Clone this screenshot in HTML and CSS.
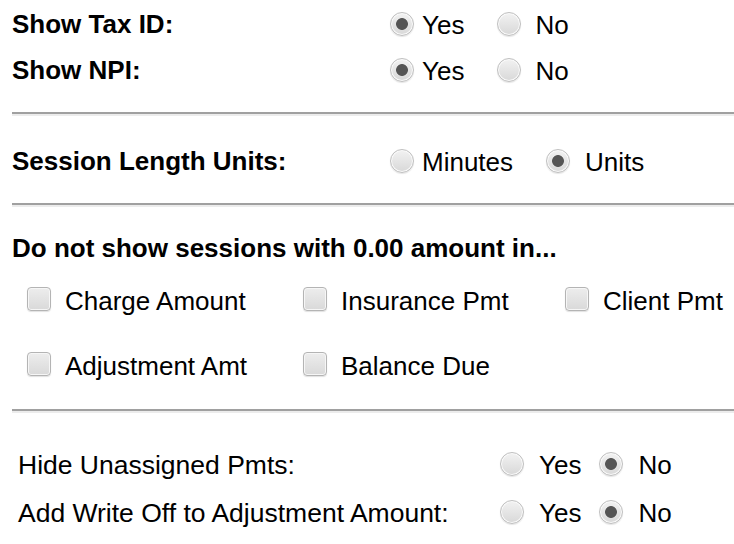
FILE: index.html
```html
<!DOCTYPE html>
<html>
<head>
<meta charset="utf-8">
<link rel="stylesheet" href="styles.css">
</head>
<body>
<div class="page">
  <section class="sec sec-top">
    <div class="row">
      <div class="lbl bold">Show Tax ID:</div>
      <div class="opts">
        <label class="opt"><input type="radio" name="tax" checked><span>Yes</span></label>
        <label class="opt wide"><input type="radio" name="tax"><span>No</span></label>
      </div>
    </div>
    <div class="row">
      <div class="lbl bold">Show NPI:</div>
      <div class="opts">
        <label class="opt"><input type="radio" name="npi" checked><span>Yes</span></label>
        <label class="opt wide"><input type="radio" name="npi"><span>No</span></label>
      </div>
    </div>
  </section>
  <hr class="sep">
  <section class="sec sec-session">
    <div class="row">
      <div class="lbl bold">Session Length Units:</div>
      <div class="opts">
        <label class="opt"><input type="radio" name="units"><span>Minutes</span></label>
        <label class="opt wider"><input type="radio" name="units" checked><span>Units</span></label>
      </div>
    </div>
  </section>
  <hr class="sep">
  <section class="sec sec-zero">
    <div class="heading bold">Do not show sessions with 0.00 amount in...</div>
    <div class="checks">
      <label class="chk"><input type="checkbox"><span>Charge Amount</span></label>
      <label class="chk"><input type="checkbox"><span>Insurance Pmt</span></label>
      <label class="chk"><input type="checkbox"><span>Client Pmt</span></label>
      <label class="chk"><input type="checkbox"><span>Adjustment Amt</span></label>
      <label class="chk"><input type="checkbox"><span>Balance Due</span></label>
    </div>
  </section>
  <hr class="sep">
  <section class="sec sec-bottom">
    <div class="row row-b">
      <div class="lbl lbl-b">Hide Unassigned Pmts:</div>
      <div class="opts opts-b">
        <label class="opt wider"><input type="radio" name="hide"><span>Yes</span></label>
        <label class="opt wider"><input type="radio" name="hide" checked><span>No</span></label>
      </div>
    </div>
    <div class="row row-b">
      <div class="lbl lbl-b">Add Write Off to Adjustment Amount:</div>
      <div class="opts opts-b">
        <label class="opt wider"><input type="radio" name="wo"><span>Yes</span></label>
        <label class="opt wider"><input type="radio" name="wo" checked><span>No</span></label>
      </div>
    </div>
  </section>
</div>
</body>
</html>
```
FILE: styles.css
```css
html, body {
  margin: 0;
  padding: 0;
  background: #fff;
}
body {
  font-family: "Liberation Sans", Arial, sans-serif;
  font-size: 26px;
  color: #000;
}
.page {
  padding-left: 12px;
}
.sec {
  display: flex;
  flex-direction: column;
}
.sec-top {
  padding-top: 1px;
}
.row {
  display: flex;
  align-items: center;
  height: 46px;
}
.lbl {
  width: 378px;
  flex: none;
}
.bold {
  font-weight: bold;
}
.opts {
  display: flex;
  align-items: center;
  gap: 33px;
}
.opt {
  display: flex;
  align-items: center;
  gap: 8px;
}
.opt span {
  padding-top: 2px;
}
.opt.wide {
  gap: 14px;
}
.opt.wider {
  gap: 15px;
}
input[type="radio"] {
  appearance: none;
  -webkit-appearance: none;
  margin: 0;
  width: 24px;
  height: 24px;
  border-radius: 50%;
  border: 1px solid #c0c0c0;
  background: linear-gradient(#f2f2f2, #d8d8d8);
  box-shadow: inset 0 0 0 1px #fafafa, 0 1px 1px rgba(0,0,0,0.1);
  flex: none;
}
input[type="radio"]:checked {
  background: radial-gradient(circle, #555 0, #555 5.5px, transparent 6.3px), linear-gradient(#f2f2f2, #d8d8d8);
}
.sep {
  margin: 0;
  height: 0;
  border: none;
  border-top: 2px solid #a0a0a0;
  border-bottom: 2px solid #ececec;
}
.sec-top + .sep {
  margin-top: 19px;
}
.sec-session {
  margin-top: 22px;
}
.sec-session + .sep {
  margin-top: 19px;
}
.sec-zero {
  margin-top: 26px;
}
.heading {
  height: 30px;
  line-height: 30px;
}
.checks {
  display: grid;
  grid-template-columns: 276px 262px auto;
  row-gap: 19px;
  padding-left: 15px;
  margin-top: 13px;
}
.chk {
  display: flex;
  align-items: center;
  gap: 14px;
  height: 46px;
}
.chk span {
  padding-top: 4px;
}
input[type="checkbox"] {
  appearance: none;
  -webkit-appearance: none;
  margin: 0;
  width: 24px;
  height: 24px;
  border-radius: 4px;
  border: 1px solid #b4b4b4;
  background: linear-gradient(#ededed, #d9d9d9);
  box-shadow: inset 0 0 0 1px #f6f6f6, 0 1px 1px rgba(0,0,0,0.12);
  flex: none;
}
.sec-zero + .sep {
  margin-top: 22px;
}
.sec-bottom {
  margin-top: 28px;
  padding-left: 6px;
  gap: 2px;
}
.row-b {
  height: 46px;
}
.lbl-b {
  width: 482px;
  font-size: 26.5px;
  padding-top: 2px;
}
.opts-b {
  gap: 18px;
}
```
